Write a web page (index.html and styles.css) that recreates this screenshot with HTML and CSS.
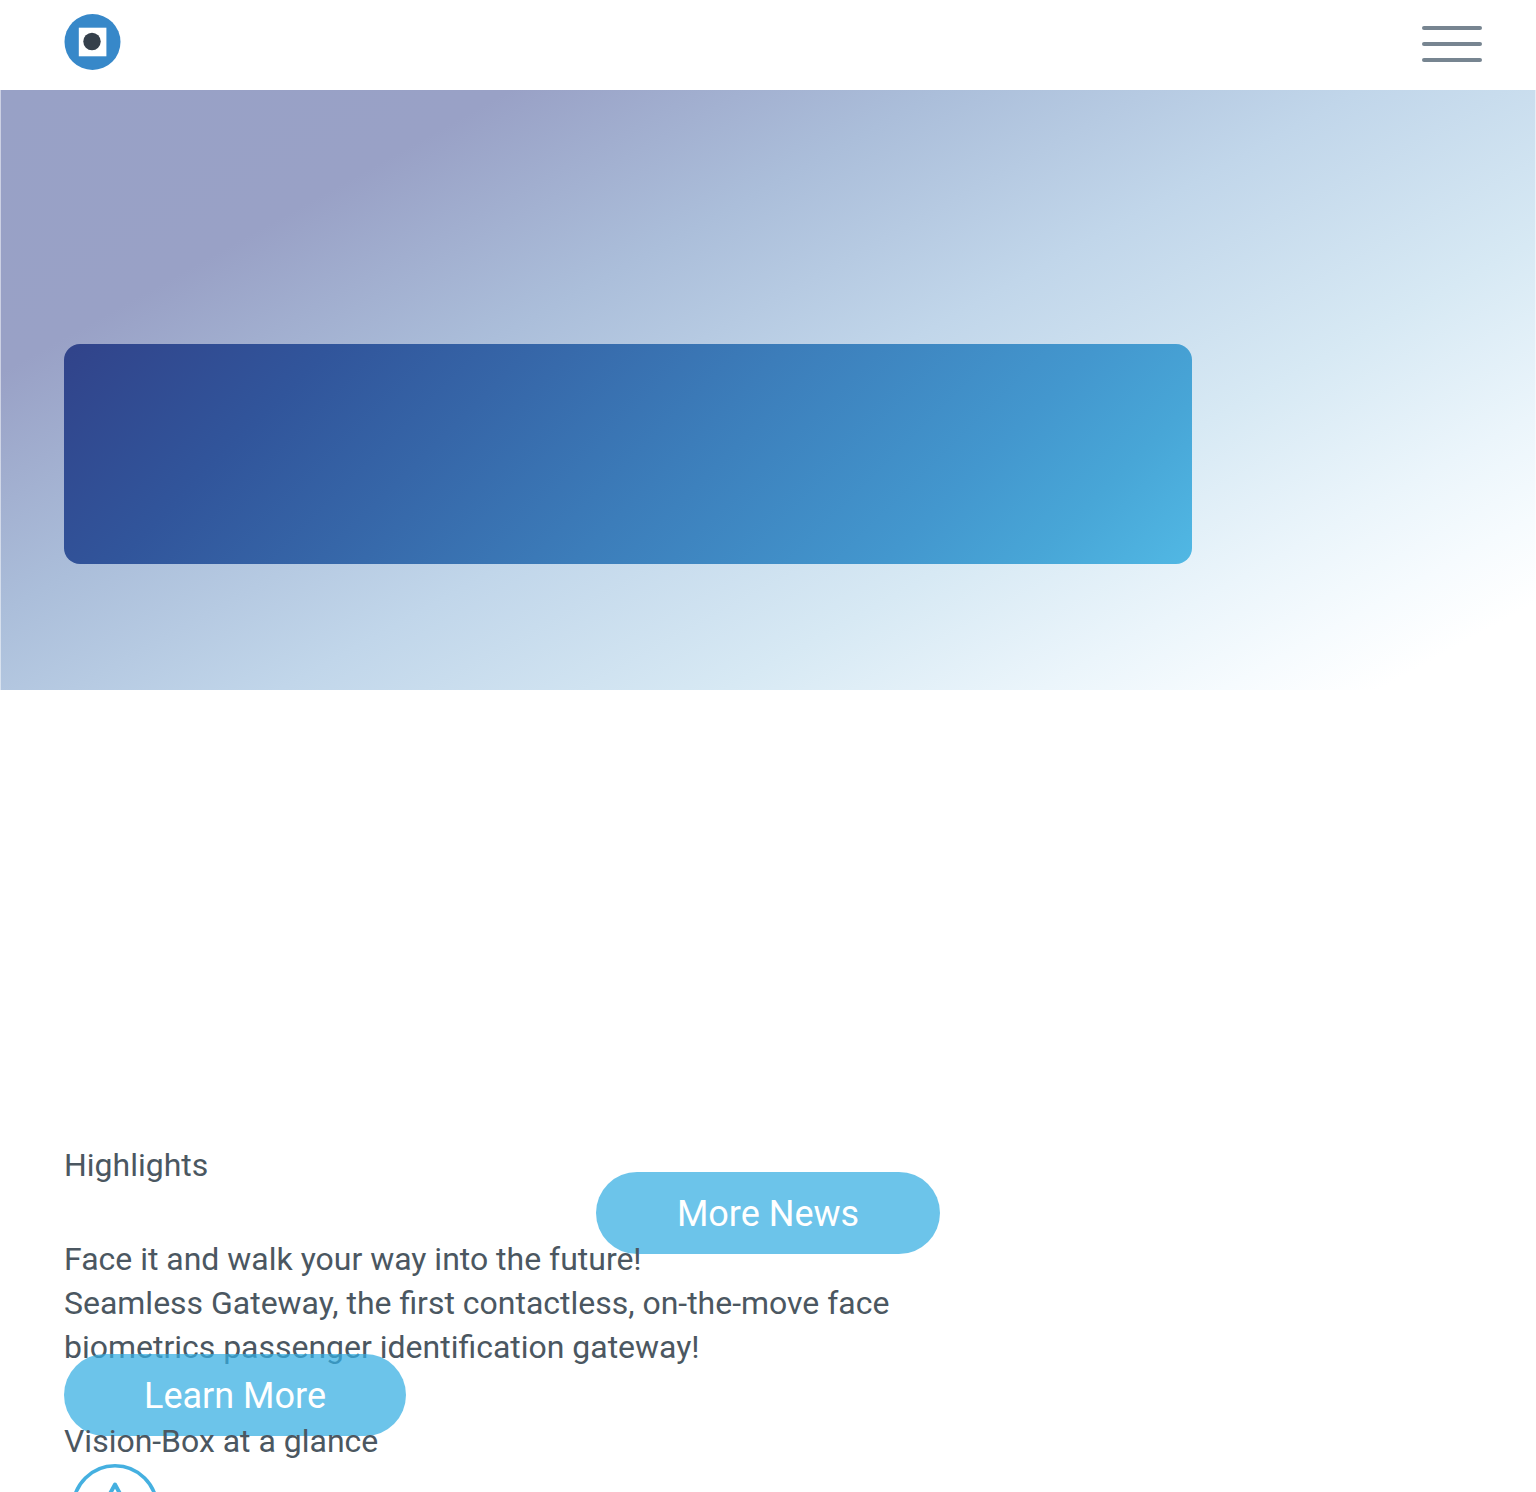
FILE: index.html
```html
<!DOCTYPE html>
<html lang="en">
<head>
<meta charset="utf-8">
<title>Vision-Box</title>
<link rel="stylesheet" href="styles.css">
</head>
<body>
<header class="header">
  <a class="logo" href="#" aria-label="Home">
    <svg width="57" height="57" viewBox="0 0 57 57">
      <circle cx="28.5" cy="28" r="28" fill="#3788c9"/>
      <rect x="14.8" y="13.7" width="27.6" height="28.6" fill="#fff"/>
      <circle cx="28" cy="27.5" r="8.7" fill="#35404b"/>
    </svg>
  </a>
  <button class="menu" aria-label="Menu"><span></span><span></span><span></span></button>
</header>
<section class="hero">
  <div class="hero-card"></div>
</section>
<main class="content">
  <section class="highlights">
    <h2 class="line above">Highlights</h2>
    <a class="button more-news" href="#">More News</a>
    <h3 class="line above">Face it and walk your way into the future!</h3>
    <p class="line">Seamless Gateway, the first contactless, on-the-move face biometrics passenger identification gateway!</p>
    <a class="button learn-more" href="#">Learn More</a>
  </section>
  <section class="glance">
    <h2 class="line above">Vision-Box at a glance</h2>
    <svg class="glance-icon" width="104" height="29" viewBox="0 0 104 29" fill="none" stroke="#45b0e0">
      <circle cx="51" cy="44.500" r="41.800" stroke-width="3.6"/>
      <path d="M42 38 51 21.500 60 38" stroke-width="4" stroke-linejoin="round"/>
    </svg>
  </section>
</main>
</body>
</html>
```
FILE: styles.css
```css
* {
  box-sizing: border-box;
}

body {
  margin: 0;
  background: #fff;
  color: #4b5761;
  font-family: Roboto, "Liberation Sans", sans-serif;
  font-size: 32px;
  line-height: 44px;
}

.header {
  display: flex;
  justify-content: space-between;
  align-items: flex-start;
  height: 90px;
  padding: 14px 54px 0 64px;
  background: #fff;
}

.logo,
.logo svg {
  display: block;
}

.menu {
  display: flex;
  flex-direction: column;
  gap: 12px;
  width: 60px;
  margin: 12px 0 0;
  padding: 0;
  border: 0;
  background: none;
}

.menu span {
  width: 60px;
  height: 4px;
  border-radius: 2px;
  background: #778591;
}

.hero {
  height: 600px;
  padding: 254px 63px 0;
  border: solid rgba(255, 255, 255, 0.5);
  border-width: 0 1px;
  background: linear-gradient(151deg, #98a1c6 0%, #99a1c6 19.5%, #abbeda 36%, #c1d6ea 52%, #d7e9f4 69%, #ebf5fb 81%, #f6fbfe 88%, #fff 94%);
  background-origin: border-box;
}

.hero-card {
  width: 1128px;
  height: 220px;
  border-radius: 16px;
  background: linear-gradient(135deg, #31438a 0%, #31559b 20%, #3666a8 35%, #3c7dba 54%, #4397ce 77%, #48a6d7 88%, #51b8e4 100%);
}

.content {
  padding: 453px 64px 0;
}

.highlights {
  position: relative;
  height: 276px;
}

.line {
  margin: 0;
  max-width: 860px;
  font-size: 31.97px;
  font-weight: 400;
}

.above {
  position: relative;
  z-index: 2;
}

h2.line {
  margin-bottom: 50px;
}

.button {
  position: absolute;
  z-index: 1;
  height: 82px;
  border-radius: 41px;
  background: rgba(51, 173, 226, 0.72);
  color: #fff;
  font-size: 36px;
  line-height: 84px;
  text-align: center;
  text-decoration: none;
}

.more-news {
  top: 29px;
  left: 532px;
  width: 344px;
}

.learn-more {
  top: 211px;
  left: 0;
  width: 342px;
}

.glance h2.line {
  margin-bottom: 0;
}

.glance-icon {
  display: block;
}
```
